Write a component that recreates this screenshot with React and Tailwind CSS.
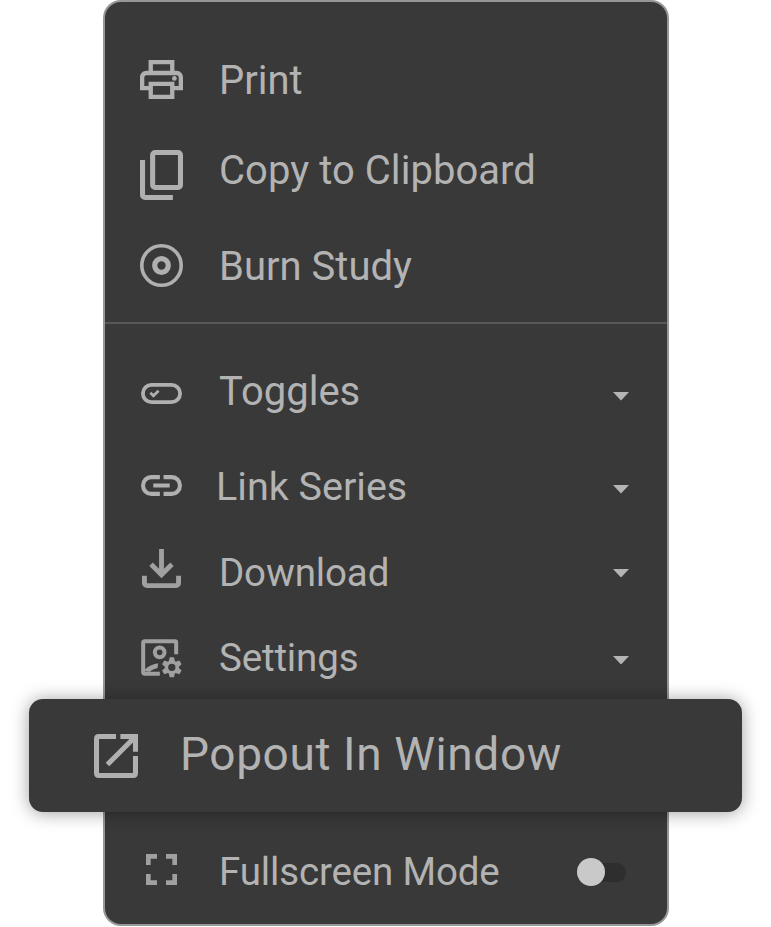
import React from "react";

const PrintIcon = () => (
  <svg className="h-[39px] w-[43px] -mt-px" viewBox="2 3 20 18" preserveAspectRatio="none" fill="currentColor">
    <path d="M19 8h-1V3H6v5H5c-1.66 0-3 1.34-3 3v6h4v4h12v-4h4v-6c0-1.66-1.34-3-3-3zM8 5h8v3H8V5zm8 12v2H8v-4h8v2zm2-2v-2H6v2H4v-4c0-.55.45-1 1-1h14c.55 0 1 .45 1 1v4h-2z" />
    <circle cx="18" cy="11.5" r="1.1" />
  </svg>
);

const CopyIcon = () => (
  <svg className="mt-[10px] h-[50px] w-[43px]" viewBox="120 -880 680 800" preserveAspectRatio="none" fill="currentColor">
    <path d="M360-240q-33 0-56.5-23.5T280-320v-480q0-33 23.5-56.5T360-880h360q33 0 56.5 23.5T800-800v480q0 33-23.5 56.5T720-240H360Zm0-80h360v-480H360v480ZM200-80q-33 0-56.5-23.5T120-160v-560h80v560h440v80H200Z" />
  </svg>
);

const DiscIcon = () => (
  <svg className="-mt-[2px] h-[43px] w-[43px]" viewBox="0 0 43 43" fill="none" stroke="currentColor">
    <circle cx="21.5" cy="21.5" r="19.7" strokeWidth="3.6" />
    <circle cx="21.5" cy="21.5" r="6.8" strokeWidth="5.2" />
  </svg>
);

const ToggleIcon = () => (
  <svg className="mt-[7px] h-[21px] w-[41px]" viewBox="0 0 41 21" fill="none" stroke="currentColor">
    <rect x="1.9" y="1.9" width="37.2" height="17.2" rx="8.6" strokeWidth="3.8" />
    <path d="M9.4 9.8 12.4 12.8 17.6 7.7" strokeWidth="2.7" />
  </svg>
);

const LinkIcon = () => (
  <svg className="-mt-px h-[21px] w-[41px]" viewBox="2 7 20 10" preserveAspectRatio="none" fill="none" stroke="currentColor" strokeWidth="2">
    <path d="M11.2 8H7a4 4 0 0 0 0 8h4.2M13 8h4a4 4 0 0 1 0 8h-4M8 12h8" />
  </svg>
);

const DownloadIcon = () => (
  <svg className="-mt-[8px] h-[39px] w-[39px]" viewBox="160 -800 640 640" fill="currentColor">
    <path d="M480-320 280-520l56-58 104 104v-326h80v326l104-104 56 58-200 200ZM240-160q-33 0-56.5-23.5T160-240v-120h80v120h480v-120h80v120q0 33-23.5 56.5T720-160H240Z" />
  </svg>
);

const SettingsIcon = () => (
  <svg className="mt-[3px] h-[39px] w-[41px]" viewBox="123 597 122 117" fill="none" stroke="currentColor" strokeWidth="12">
    <path d="M228 643V608q0-4-4-4H134q-5 0-5 5v87q0 5 5 5h45" />
    <circle cx="178.500" cy="637" r="14.500" />
    <path d="M131 692q16-18 43-22l-2 14q-14 3-25 12z" fill="currentColor" stroke="none" />
    <g transform="translate(215 682)">
      <circle r="16" strokeWidth="10" />
      <g fill="currentColor" stroke="none">
        <path d="M-6.500-30h13l3 14h-19z" />
        <path d="M-6.500-30h13l3 14h-19z" transform="rotate(60)" />
        <path d="M-6.500-30h13l3 14h-19z" transform="rotate(120)" />
        <path d="M-6.500-30h13l3 14h-19z" transform="rotate(180)" />
        <path d="M-6.500-30h13l3 14h-19z" transform="rotate(240)" />
        <path d="M-6.500-30h13l3 14h-19z" transform="rotate(300)" />
      </g>
    </g>
  </svg>
);

const PopoutIcon = () => (
  <svg className="mt-[1px] h-[44px] w-[44px]" viewBox="0 0 131 131" fill="none" stroke="currentColor" strokeWidth="15">
    <path d="M65.500 7.500H14q-6.500 0-6.500 6.500v103q0 6.500 6.500 6.500h103q6.500 0 6.500-6.500V65.500" />
    <path d="M78.500 7.500h45v45M119 12 40 91" />
  </svg>
);

const FullscreenIcon = () => (
  <svg className="-mt-[3px] h-[31px] w-[31px]" viewBox="0 0 93 93" fill="none" stroke="currentColor" strokeWidth="14">
    <path d="M33 7H7v26M60 7h26v26M33 86H7V60M60 86h26V60" />
  </svg>
);

const Caret = ({ className }) => (
  <svg className={`h-[8.500px] w-4 ${className}`} viewBox="0 0 16 8.500" fill="#b4b4b4">
    <path d="M0 0h16L8 8.500z" />
  </svg>
);

function Row({ icon, iconClass = "text-[#b0b0b0]", label, labelClass = "ml-[35px] mt-[2px] text-[40px]", className, children }) {
  return (
    <div className={`flex h-[46px] items-center pl-[34px] ${className}`}>
      <div className={`flex w-[45px] shrink-0 items-center justify-center ${iconClass}`}>{icon}</div>
      <span className={`flex-1 whitespace-nowrap leading-[46px] ${labelClass}`}>{label}</span>
      {children}
    </div>
  );
}

const compactLabel = "ml-[35px] mt-[2px] text-[38.5px] tracking-[-0.15px]";

export default function App() {
  return (
    <div className="h-[927px] w-[771px] overflow-hidden bg-white font-['Roboto',sans-serif] text-[#b3b3b3]">
      <div className="ml-[103px] flex h-[926px] w-[566px] flex-col rounded-[18px] border-2 border-[#979797] bg-[#393939]">
        <Row className="mt-[55px]" icon={<PrintIcon />} label="Print" />
        <Row className="mt-[44px]" icon={<CopyIcon />} label="Copy to Clipboard" labelClass="ml-[35px] mt-[2px] text-[40px] tracking-[0.05px]" />
        <Row className="mt-[50px]" icon={<DiscIcon />} label="Burn Study" />
        <div className="mt-[33px] h-[2px] shrink-0 bg-[#585858]" />
        <Row className="mt-[43px] pr-[38px]" icon={<ToggleIcon />} label="Toggles" labelClass="ml-[35px] mt-[4px] text-[40px]">
          <Caret className="mt-[13px]" />
        </Row>
        <Row className="mt-[50px] pr-[38px]" icon={<LinkIcon />} label="Link Series" labelClass="ml-[32px] mt-[2px] text-[39.5px]">
          <Caret className="mt-[7px]" />
        </Row>
        <Row className="mt-[40px] pr-[38px]" icon={<DownloadIcon />} iconClass="text-[#a0a0a0]" label="Download" labelClass={compactLabel}>
          <Caret className="mt-[2px]" />
        </Row>
        <Row className="mt-[39px] pr-[38px]" icon={<SettingsIcon />} iconClass="text-[#a0a0a0]" label="Settings" labelClass={compactLabel}>
          <Caret className="mt-[6px]" />
        </Row>
        <div className="-ml-[76px] mt-[19px] flex h-[113px] w-[713px] shrink-0 items-center rounded-[14px] bg-[#393939] pl-[65px] shadow-[0_1px_18px_rgba(0,0,0,0.38)]">
          <div className="shrink-0 text-[#b0b0b0]"><PopoutIcon /></div>
          <span className="-mt-[3px] ml-[42px] whitespace-nowrap text-[46px] leading-[54px] tracking-[0.6px]">Popout In Window</span>
        </div>
        <Row className="mt-[36px] pr-[41px]" icon={<FullscreenIcon />} iconClass="text-[#a0a0a0]" label="Fullscreen Mode" labelClass={compactLabel}>
          <div className="mt-[2px] flex h-[19px] w-[46px] items-center rounded-full bg-[#2e2e2e]">
            <div className="-ml-[3px] size-7 shrink-0 rounded-full bg-[#c9c9c9]" />
          </div>
        </Row>
      </div>
    </div>
  );
}
